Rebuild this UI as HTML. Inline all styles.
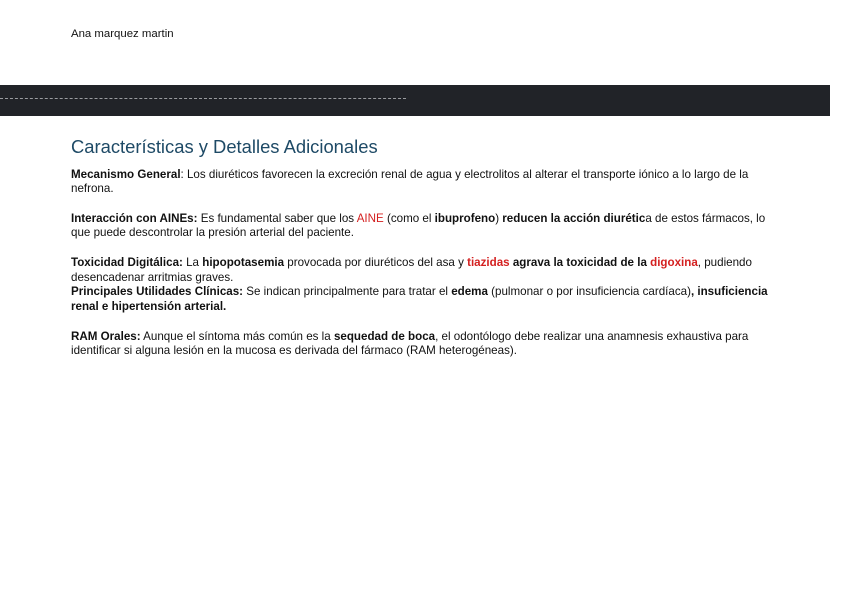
<!DOCTYPE html>
<html><head><meta charset="utf-8"><style>
body{margin:0;width:848px;height:599px;background:#fff;position:relative;overflow:hidden;font-family:"Liberation Sans",sans-serif;color:#111;}
.l{position:absolute;left:71px;font-size:11.6px;white-space:nowrap;line-height:14px;}
b{font-weight:bold}
.r{color:#d42020}
</style></head><body>
<div class="l" style="top:27px;font-size:11.4px">Ana marquez martin</div>
<div style="position:absolute;left:0;top:85px;width:830px;height:31px;background:#212328"></div>
<div style="position:absolute;left:0;top:98px;width:406px;border-top:1px dashed #9a9ca0"></div>
<div class="l" style="top:136px;font-size:18.4px;line-height:22px;color:#1e4a66">Características y Detalles Adicionales</div>
<div class="l" style="top:168px"><b>Mecanismo General</b>: Los diuréticos favorecen la excreción renal de agua y electrolitos al alterar el transporte iónico a lo largo de la</div>
<div class="l" style="top:182px">nefrona.</div>
<div class="l" style="top:212px"><b>Interacción con AINEs:</b> Es fundamental saber que los <span class="r">AINE</span> (como el <b>ibuprofeno</b>) <b>reducen la acción diurétic</b>a de estos fármacos, lo</div>
<div class="l" style="top:226px">que puede descontrolar la presión arterial del paciente.</div>
<div class="l" style="top:256px"><b>Toxicidad Digitálica:</b> La <b>hipopotasemia</b> provocada por diuréticos del asa y <b class="r">tiazidas</b> <b>agrava la toxicidad de la</b> <b class="r">digoxina</b>, pudiendo</div>
<div class="l" style="top:271px">desencadenar arritmias graves.</div>
<div class="l" style="top:285px"><b>Principales Utilidades Clínicas:</b> Se indican principalmente para tratar el <b>edema</b> (pulmonar o por insuficiencia cardíaca)<b>, insuficiencia</b></div>
<div class="l" style="top:300px"><b>renal e hipertensión arterial.</b></div>
<div class="l" style="top:330px"><b>RAM Orales:</b> Aunque el síntoma más común es la <b>sequedad de boca</b>, el odontólogo debe realizar una anamnesis exhaustiva para</div>
<div class="l" style="top:344px">identificar si alguna lesión en la mucosa es derivada del fármaco (RAM heterogéneas).</div>
</body></html>
